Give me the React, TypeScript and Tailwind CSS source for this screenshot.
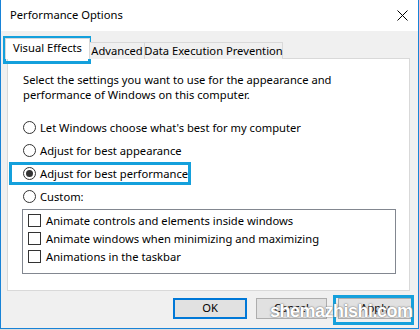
import React from "react";

const font = "font-['Segoe_UI','Noto_Sans',sans-serif]";

function Radio({ checked, label }: { checked?: boolean; label: string }) {
  return (
    <div className="flex h-[23px] items-center">
      <div className="flex h-[13px] w-[13px] items-center justify-center rounded-full border border-[#333] bg-white">
        {checked && <div className="h-[7px] w-[7px] rounded-full bg-[#333]" />}
      </div>
      <span className="ml-[4px] whitespace-nowrap text-[11.2px] leading-[15px] text-black">{label}</span>
    </div>
  );
}

function Check({ label }: { label: string }) {
  return (
    <div className="flex h-[18px] items-center">
      <div className="h-[13px] w-[13px] border border-[#333] bg-white" />
      <span className="ml-[5px] whitespace-nowrap text-[11.2px] leading-[15px] text-black">{label}</span>
    </div>
  );
}

export default function App() {
  return (
    <div className={`relative h-[330px] w-[419px] overflow-hidden bg-[#dcdcdc] ${font}`}>
      <div className="flex h-[329px] w-[419px] flex-col border-x border-b border-[#1883d7]">
        {/* title bar */}
        <div className="flex h-[31px] shrink-0 items-center justify-between bg-white pl-[9px] pr-[9px]">
          <span className="whitespace-nowrap text-[11.2px] text-black">Performance Options</span>
          <svg width="11" height="11" viewBox="0 0 11 11" className="mr-[1px]">
            <path d="M0.5 0.5 L10.5 10.5 M10.5 0.5 L0.5 10.5" stroke="#000" strokeWidth="1" />
          </svg>
        </div>
        {/* body */}
        <div className="flex flex-1 flex-col bg-[#f0f0f0] pl-[6px] pr-[8px] pt-[7px]">
          {/* tabs */}
          <div className="relative z-10 -ml-[2px] flex h-[21px] items-end whitespace-nowrap text-[11.2px] text-black">
            <div className="flex h-[21px] w-[85px] items-center justify-center border border-b-0 border-[#d9d9d9] bg-white pb-[1px]">
              Visual Effects
            </div>
            <div className="flex h-[17px] w-[55px] items-center justify-center border-r border-t border-[#d9d9d9] bg-[#f0f0f0]">
              Advanced
            </div>
            <div className="flex h-[17px] w-[138px] items-center justify-center border-r border-t border-[#d9d9d9] bg-[#f0f0f0]">
              Data Execution Prevention
            </div>
          </div>
          {/* panel */}
          <div className="-mt-[1px] flex h-[233px] flex-col border border-[#d9d9d9] bg-white pl-[15px] pr-[13px] pt-[13px]">
            <p className="whitespace-nowrap text-[11.2px] leading-[15px] text-black">
              Select the settings you want to use for the appearance and
              <br />
              performance of Windows on this computer.
            </p>
            <div className="mt-[14px] flex flex-col">
              <Radio label="Let Windows choose what's best for my computer" />
              <Radio label="Adjust for best appearance" />
              <Radio checked label="Adjust for best performance" />
              <Radio label="Custom:" />
            </div>
            <div className="-ml-[1px] mt-[1px] flex h-[65px] flex-col border border-[#828790] pl-[5px] pt-[1px]">
              <Check label="Animate controls and elements inside windows" />
              <Check label="Animate windows when minimizing and maximizing" />
              <Check label="Animations in the taskbar" />
            </div>
          </div>
          {/* buttons */}
          <div className="-mr-[2px] mt-[7px] flex justify-end text-[11.2px] text-black">
            <div className="flex h-[21px] w-[74px] items-center justify-center border-2 border-[#0078d7] bg-[#e1e1e1]">OK</div>
            <div className="ml-[9px] flex h-[21px] w-[71px] items-center justify-center border border-[#adadad] bg-[#e1e1e1]">Cancel</div>
            <div className="ml-[11px] flex h-[21px] w-[74px] items-center justify-center border border-[#adadad] bg-[#e1e1e1]">Apply</div>
          </div>
        </div>
      </div>

      {/* annotation boxes */}
      <div className="pointer-events-none absolute left-[3px] top-[36px] h-[28px] w-[88px] border-[3px] border-[#14a0dc]" />
      <div className="pointer-events-none absolute left-[9px] top-[162px] h-[23px] w-[182px] border-[3px] border-[#14a0dc]" />
      <div className="pointer-events-none absolute left-[333px] top-[295px] h-[30px] w-[81px] border-[3px] border-[#14a0dc]" />

      {/* watermark */}
      <div className="pointer-events-none absolute left-[270px] top-[300px] whitespace-nowrap font-['Liberation_Sans',sans-serif] text-[18px] font-bold leading-[22px] tracking-[-0.5px] text-white [text-shadow:0_0_2px_#777,0_0_1px_#777]">
        shemazhishi.com
      </div>
    </div>
  );
}
